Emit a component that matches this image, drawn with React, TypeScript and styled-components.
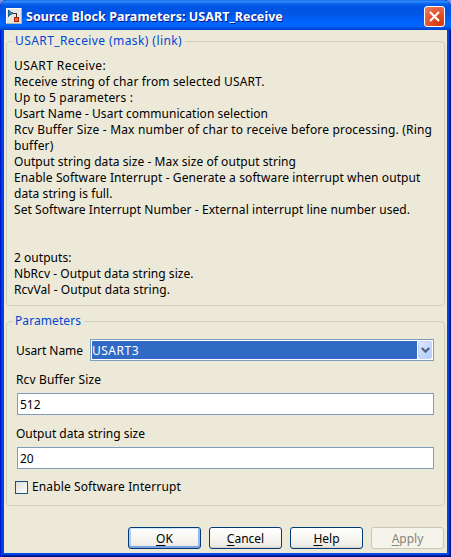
import React from "react";
import styled, { createGlobalStyle, css } from "styled-components";

const Page = createGlobalStyle`
  *, *::before, *::after { box-sizing: border-box; }
  html, body, #root { margin: 0; height: 100%; }
  body { background: #7a96df; overflow: hidden; }
  body, button, input { font: 12px/16px "Noto Sans", "Open Sans", sans-serif; color: #000; }
`;

const Window = styled.main`
  display: flex;
  flex-direction: column;
  width: 451px;
  height: 557px;
  overflow: hidden;
  border-radius: 7px 7px 0 0;
  background: #0046e0;
  box-shadow: inset 1px 0 #0019cf, inset 2px 0 #0831d9, inset -1px 0 #00138c,
    inset -2px 0 #001ea0, inset 0 -1px #00138c, inset 0 -2px #001ea0;
`;

const TitleBar = styled.header`
  display: flex;
  flex: none;
  align-items: center;
  height: 30px;
  padding: 2px 6px 0;
  background: linear-gradient(
    #0058e6 0, #3a93ff 1px, #2482f8 2px, #0a5fea 4px, #0054e3 7px,
    #0055e5 14px, #0061fc 20px, #0066ff 25px, #005bf0 27px, #0040c8 30px
  );
`;

const Title = styled.h1`
  flex: 1;
  margin: 0 0 0 4px;
  padding-top: 1px;
  color: #fff;
  font-size: 12.5px;
  font-weight: 700;
  line-height: 18px;
  letter-spacing: 0.04px;
  white-space: nowrap;
  text-shadow: 1px 1px #0a1883;
`;

const CloseButton = styled.button`
  display: flex;
  align-items: center;
  justify-content: center;
  width: 21px;
  height: 21px;
  padding: 0;
  border: 1px solid #fff;
  border-radius: 3px;
  background: radial-gradient(circle at 75% 85%, #d93a08 0, #e3502b 45%, #e88266 100%);
`;

const Client = styled.section`
  flex: 1;
  margin: 0 4px 4px;
  padding: 0 2px;
  background: #ece9d8;
`;

const Group = styled.fieldset<{ $height: number; $gap: number }>`
  display: block;
  width: 439px;
  height: ${(p) => p.$height}px;
  margin: ${(p) => p.$gap}px 0 0;
  padding: 0;
  min-width: 0;
  border: 1px solid #d0d0bf;
  border-radius: 4px;
`;

const Legend = styled.legend`
  height: 16px;
  margin-left: 6px;
  padding: 0 3px 0 2px;
  color: #0046d5;
`;

const Text = styled.span<{ $track?: number }>`
  display: inline-block;
  white-space: pre;
  letter-spacing: ${(p) => p.$track ?? 0}px;
`;

const Description = styled.div`
  display: flex;
  flex-direction: column;
  padding: 9px 0 0 7px;
`;

const Line = styled(Text)`
  height: 16px;
`;

const Form = styled.div`
  display: flex;
  flex-direction: column;
  width: 427px;
  padding: 10px 0 0 10px;
`;

const Label = styled(Text)`
  margin-left: -1px;
`;

const SelectLabel = styled(Label)`
  padding-top: 2px;
`;

const SelectRow = styled.label`
  display: flex;
  align-items: center;
  justify-content: space-between;
  height: 22px;
`;

const Select = styled.div`
  display: flex;
  width: 344px;
  height: 22px;
  padding: 1px;
  border: 1px solid #7f9db9;
  background: #fff;
`;

const Selected = styled.div`
  flex: 1;
  padding-top: 2px;
  background: #316ac5;
  color: #fff;
`;

const DropButton = styled.span`
  display: flex;
  align-items: center;
  justify-content: center;
  width: 14px;
  height: 18px;
  margin-left: 1px;
  border: 1px solid #c5d3fb;
  border-radius: 2px;
  background: linear-gradient(135deg, #dde6ff, #b4ccfb);
`;

const Field = styled.label`
  display: flex;
  flex-direction: column;
  gap: 5px;
  margin-top: 11px;
`;

const Input = styled.input`
  width: 417px;
  height: 22px;
  padding: 1px 2px 0;
  border: 1px solid #7f9db9;
  border-radius: 0;
  outline: none;
  background: #fff;
`;

const CheckRow = styled.label`
  display: flex;
  align-items: center;
  gap: 5px;
  height: 16px;
  margin: 10px 0 0 -2px;
`;

const Box = styled.span`
  width: 13px;
  height: 13px;
  border: 1px solid #1c5180;
  background: linear-gradient(135deg, #dcdcd7, #fff);
`;

const Actions = styled.footer`
  display: flex;
  justify-content: flex-end;
  gap: 8px;
  padding: 21px 1px 0 0;
`;

const Button = styled.button<{ $primary?: boolean }>`
  width: 73px;
  height: 22px;
  padding: 1px 0 0;
  border: 1px solid #003c74;
  border-radius: 3px;
  background: linear-gradient(#fff, #f5f4ef 60%, #ecebe5 88%, #d9d3c8);
  ${(p) =>
    p.$primary &&
    css`
      box-shadow: inset 0 1px #cee7ff, inset 0 -2px #7f9fe3, inset 2px 0 #b4ccf5, inset -2px 0 #98b5ed;
    `}
  &:disabled {
    border-color: #c9c7ba;
    background: #f5f4ea;
    color: #85847b;
  }
`;

const Key = styled.span`
  text-decoration: underline;
  text-decoration-thickness: 1px;
  text-underline-offset: 2px;
  text-decoration-skip-ink: none;
`;

const lines: [string, number][] = [
  ["USART Receive:", 0.42],
  ["Receive string of char from selected USART.", 0.147],
  ["Up to 5 parameters :", 0.17],
  ["Usart Name - Usart communication selection", 0.034],
  ["Rcv Buffer Size - Max number of char to receive before processing. (Ring", 0.177],
  ["buffer)", 0.16],
  ["Output string data size - Max size of output string", 0.055],
  ["Enable Software Interrupt - Generate a software interrupt when output", 0.102],
  ["data string is full.", 0.06],
  ["Set Software Interrupt Number - External interrupt line number used.", 0.073],
  ["", 0],
  ["", 0],
  ["2 outputs:", 0.04],
  ["NbRcv - Output data string size.", 0.045],
  ["RcvVal - Output data string.", 0.07],
];

const BlockIcon = () => (
  <svg width="16" height="16" viewBox="0 0 16 16" shapeRendering="crispEdges">
    <path d="M0 0h16v16H0z" fill="#b8b4ac" />
    <path d="M0 0h15v15H0z" fill="#fff" />
    <path d="M1 1h14v14H1z" fill="#e8e6e2" />
    <path d="M2 2v6.5l5-3.25z" fill="#2586b5" stroke="#174e78" strokeWidth=".7" />
    <path d="M7 5.5h3.5V9" fill="none" stroke="#333" />
    <path d="M8.5 9.5h4v4h-4z" fill="#f26532" stroke="#a82008" />
  </svg>
);

export default function App() {
  return (
    <>
      <Page />
      <Window>
        <TitleBar>
          <BlockIcon />
          <Title>Source Block Parameters: USART_Receive</Title>
          <CloseButton aria-label="Close">
            <svg width="19" height="19" viewBox="0 0 19 19">
              <path d="M5 5l9 9M14 5l-9 9" stroke="#fff" strokeWidth="2.2" />
            </svg>
          </CloseButton>
        </TitleBar>
        <Client>
          <Group $height={273} $gap={3}>
            <Legend><Text $track={0.41}>USART_Receive (mask) (link)</Text></Legend>
            <Description>
              {lines.map(([text, track], i) => (
                <Line key={i} $track={track}>{text}</Line>
              ))}
            </Description>
          </Group>
          <Group $height={193} $gap={7}>
            <Legend><Text $track={0.08}>Parameters</Text></Legend>
            <Form>
              <SelectRow>
                <SelectLabel $track={-0.05}>Usart Name</SelectLabel>
                <Select>
                  <Selected><Text $track={0.5}>USART3</Text></Selected>
                  <DropButton>
                    <svg width="9" height="7" viewBox="0 0 9 7">
                      <path d="M.8 1l3.7 3.7L8.2 1" fill="none" stroke="#4d6185" strokeWidth="2.2" />
                    </svg>
                  </DropButton>
                </Select>
              </SelectRow>
              <Field>
                <Label $track={0.15}>Rcv Buffer Size</Label>
                <Input defaultValue="512" />
              </Field>
              <Field>
                <Label>Output data string size</Label>
                <Input defaultValue="20" />
              </Field>
              <CheckRow>
                <Box />
                <Label $track={0.12}>Enable Software Interrupt</Label>
              </CheckRow>
            </Form>
          </Group>
          <Actions>
            <Button $primary><Key>O</Key>K</Button>
            <Button><Key>C</Key>ancel</Button>
            <Button><Key>H</Key>elp</Button>
            <Button disabled><Key>A</Key>pply</Button>
          </Actions>
        </Client>
      </Window>
    </>
  );
}
